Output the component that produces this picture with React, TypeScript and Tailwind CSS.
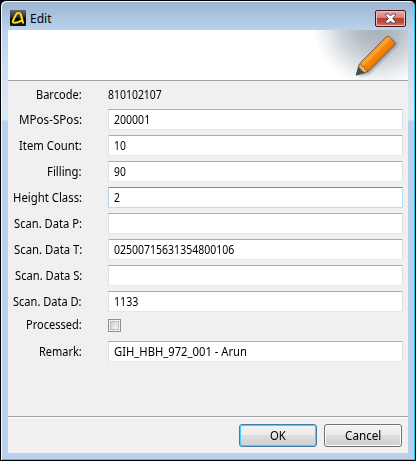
import { useLayoutEffect, useRef } from "react";

type Field = { label: string; value: string; focused?: boolean; labelWidth: number; valueWidth: number };

const fields: Field[] = [
  { label: "MPos-SPos:", value: "200001", labelWidth: 63, valueWidth: 36 },
  { label: "Item Count:", value: "10", labelWidth: 63, valueWidth: 12 },
  { label: "Filling:", value: "90", labelWidth: 35, valueWidth: 12 },
  { label: "Height Class:", value: "2", focused: true, labelWidth: 69, valueWidth: 6 },
  { label: "Scan. Data P:", value: "", labelWidth: 68, valueWidth: 0 },
  { label: "Scan. Data T:", value: "02500715631354800106", labelWidth: 68, valueWidth: 120 },
  { label: "Scan. Data S:", value: "", labelWidth: 67, valueWidth: 0 },
  { label: "Scan. Data D:", value: "1133", labelWidth: 69, valueWidth: 24 },
];

/** Single-line text condensed to a fixed advance width. */
function Fit({ text, width }: { text: string; width: number }) {
  const ref = useRef<HTMLSpanElement>(null);
  useLayoutEffect(() => {
    const el = ref.current;
    if (el) el.style.transform = `scaleX(${width / el.offsetWidth})`;
  }, [text, width]);
  return (
    <span className="block h-[18px] shrink-0 text-left text-[12px] leading-[18px] whitespace-nowrap text-black" style={{ width }}>
      <span ref={ref} className="inline-block origin-left">
        {text}
      </span>
    </span>
  );
}

function Label({ text, width }: { text: string; width: number }) {
  return (
    <div className="flex w-[74px] shrink-0 justify-end">
      <Fit text={text} width={width} />
    </div>
  );
}

function Input({ value, width, focused }: { value: string; width: number; focused?: boolean }) {
  return (
    <div
      className={`flex h-[21px] w-[295px] items-center rounded-[1px] border bg-white pl-[5px] ${
        focused
          ? "border-t-[#5794bf] border-r-[#b5d9ed] border-b-[#b7e0f2] border-l-[#b5cfe7]"
          : "border-t-[#abadb3] border-r-[#dbdfe6] border-b-[#e3e7ef] border-l-[#dce0e7]"
      }`}
    >
      {value && <Fit text={value} width={width} />}
    </div>
  );
}

function Logo() {
  return (
    <svg width="16" height="16" viewBox="0 0 16 16">
      <defs>
        <linearGradient id="tile" x2="0" y2="1">
          <stop stopColor="#666" />
          <stop offset=".48" stopColor="#282828" />
          <stop offset=".52" stopColor="#030303" />
          <stop offset="1" stopColor="#151515" />
        </linearGradient>
      </defs>
      <rect width="16" height="16" rx="1" fill="url(#tile)" />
      <path
        d="M13 12.8L10.8 4.4Q10.3 3 8.5 3Q6.8 3 6 4.6L3 10.4Q2.1 12.8 4.8 12.8Q8 12.7 11.4 10.6"
        fill="none"
        stroke="#f9dc13"
        strokeWidth="2.1"
        strokeLinecap="round"
        strokeLinejoin="round"
      />
    </svg>
  );
}

function Pencil() {
  return (
    <svg width="110" height="50" viewBox="0 0 110 50" className="block">
      <defs>
        <radialGradient id="haze" gradientUnits="userSpaceOnUse" cx="80" cy="-8" r="66">
          <stop stopColor="#a0acb6" />
          <stop offset=".35" stopColor="#b4bec6" />
          <stop offset=".6" stopColor="#cfd5da" />
          <stop offset=".82" stopColor="#eceff1" />
          <stop offset="1" stopColor="#fff" />
        </radialGradient>
        <linearGradient id="barrel" x1="0" y1="0" x2="0" y2="1">
          <stop stopColor="#f18a13" />
          <stop offset=".25" stopColor="#ffa83e" />
          <stop offset=".42" stopColor="#fa8b10" />
          <stop offset="1" stopColor="#e97000" />
        </linearGradient>
        <filter id="shade" x="-30%" y="-30%" width="170%" height="170%">
          <feGaussianBlur stdDeviation="1.7" />
        </filter>
      </defs>
      <rect width="110" height="50" fill="url(#haze)" />
      <path d="M61 46L63 36L92 7L100 14L71 44Z" fill="#53606b" opacity=".5" filter="url(#shade)" />
      <g transform="translate(58.5 44.8) rotate(-45)">
        <path d="M0 0L9 -5.3L12 -5.8H47.5Q50 -5.8 50 -3.5V3.5Q50 5.8 47.5 5.8H12L9 5.3Z" fill="url(#barrel)" stroke="#6b5846" strokeWidth=".8" />
        <path d="M7 -4.2L11 -4.8L9.5 -1.7L12 0L9.5 1.7L11 4.8L7 4.2Z" fill="#f5b963" stroke="#765632" strokeWidth=".6" />
        <path d="M-.5 0L7 -4L6.2 0L7 4Z" fill="#444b51" stroke="#444b51" strokeWidth=".6" />
      </g>
    </svg>
  );
}

function CloseButton() {
  return (
    <div className="flex h-[17px] w-[31px] items-center justify-center rounded-[2px] border border-[#4a1520] bg-[linear-gradient(#e6aaa3_0%,#d58178_46%,#bc3e30_50%,#c04836_75%,#d9826f_100%)] shadow-[inset_0_0_0_1px_#eac0bb]">
      <svg width="13" height="11" viewBox="0 0 13 11">
        <path d="M1.5 1H4.7L6.5 3L8.3 1H11.5V2.2L8.6 5.5L11.5 8.8V10H8.3L6.5 8L4.7 10H1.5V8.8L4.4 5.5L1.5 2.2Z" fill="#fff" stroke="#535666" strokeWidth="1" />
      </svg>
    </div>
  );
}

export default function App() {
  return (
    <div className="h-[461px] w-[416px] bg-black font-['Noto_Sans','Open_Sans',sans-serif]">
      <div className="flex h-[461px] w-[416px] flex-col rounded-t-[6px] border border-black bg-[linear-gradient(#99b4d1_0px,#bad2eb_29px,#d5e3f2_85px,#dce8f5_118px,#b9d1ea_121px)] px-[7px] pb-[7px] shadow-[inset_1px_1px_0_#f5faff,inset_-1px_-1px_0_#29cbe8]">
        <div className="flex h-[29px] shrink-0 items-start pt-[9px] pl-[2px]">
          <Logo />
          <div className="ml-[4px] flex-1">
            <Fit text="Edit" width={21} />
          </div>
          <div className="mr-[2px]">
            <CloseButton />
          </div>
        </div>
        <div className="flex h-[51px] shrink-0 justify-end border-b border-[#a0a0a0] bg-white">
          <Pencil />
        </div>
        <div className="h-[335px] shrink-0 bg-[#f0f0f0] pt-[5px]">
          <div className="flex h-[18px] items-center gap-[26px]">
            <Label text="Barcode:" width={46} />
            <Fit text="810102107" width={54} />
          </div>
          <div className="mt-[5px] flex flex-col gap-[5px]">
            {fields.map((f) => (
              <div key={f.label} className="flex h-[21px] items-center gap-[26px]">
                <Label text={f.label} width={f.labelWidth} />
                <Input value={f.value} width={f.valueWidth} focused={f.focused} />
              </div>
            ))}
          </div>
          <div className="mt-[5px] flex h-[16px] items-center gap-[26px]">
            <Label text="Processed:" width={56} />
            <div className="mt-px h-[13px] w-[13px] border border-[#8e8f8f] bg-[#f4f4f4] p-px">
              <div className="h-[9px] w-[9px] border border-[#b7bdc4] bg-linear-to-br from-[#cbcfd5] to-[#f6f6f6]" />
            </div>
          </div>
          <div className="mt-[8px] flex h-[21px] items-center gap-[26px]">
            <Label text="Remark:" width={43} />
            <Input value="GIH_HBH_972_001 - Arun" width={133} />
          </div>
        </div>
        <div className="flex h-[37px] shrink-0 justify-end gap-[7px] border-t border-[#a0a0a0] bg-[#f0f0f0] pt-[7px] pr-[6px] shadow-[inset_0_1px_0_#fff]">
          <button className="flex h-[23px] w-[78px] items-center justify-center rounded-[3px] border border-[#3c7fb1] bg-[linear-gradient(#f2f2f2_0%,#ebebeb_48%,#dddddd_50%,#cfcfcf_100%)] shadow-[inset_0_0_0_1px_#48d1f5]">
            <Fit text="OK" width={16} />
          </button>
          <button className="flex h-[23px] w-[78px] items-center justify-center rounded-[3px] border border-[#707070] bg-[linear-gradient(#f2f2f2_0%,#ebebeb_48%,#dddddd_50%,#cfcfcf_100%)] shadow-[inset_0_0_0_1px_#fbfbfb]">
            <Fit text="Cancel" width={36} />
          </button>
        </div>
      </div>
    </div>
  );
}
